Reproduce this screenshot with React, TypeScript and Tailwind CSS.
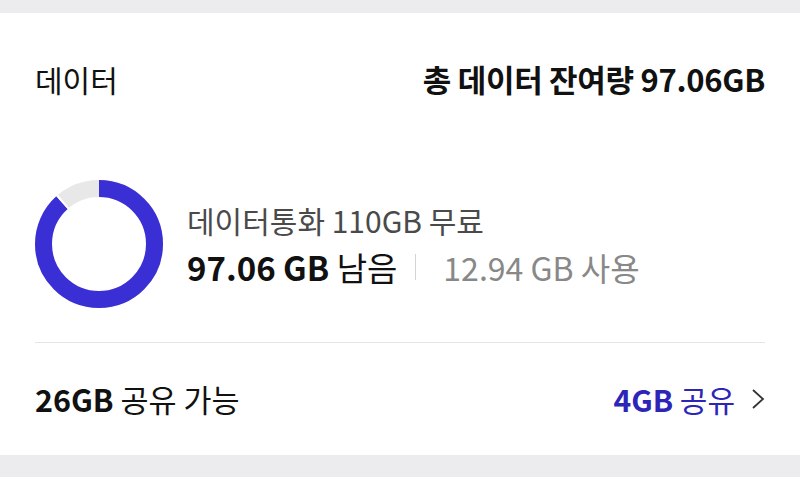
const font = { fontFamily: '"Noto Sans CJK KR", "Noto Sans", sans-serif' }

function Donut() {
    const r = 55.5
    const c = 2 * Math.PI * r
    const used = 12.94 / 110
    const blue = c * (1 - used)
    return (
        <svg width="128" height="128" viewBox="0 0 128 128" className="shrink-0">
            <g transform="rotate(-90 64 64)">
                <circle cx="64" cy="64" r={r} fill="none" stroke="#e8e8e8" strokeWidth="17" />
                <circle
                    cx="64"
                    cy="64"
                    r={r}
                    fill="none"
                    stroke="#3a2fd5"
                    strokeWidth="17"
                    strokeDasharray={`${blue} ${c}`}
                />
                <circle
                    cx="64"
                    cy="64"
                    r={r}
                    fill="none"
                    stroke="#ffffff"
                    strokeWidth="17"
                    strokeDasharray={`2 ${c}`}
                    strokeDashoffset={-blue}
                />
            </g>
        </svg>
    )
}

export default function App() {
    return (
        <div className="w-[800px] h-[477px] bg-[#ececee] overflow-hidden" style={font}>
            <div className="mt-[13px] h-[442px] bg-white px-[35px] flex flex-col">
                {/* header */}
                <div className="h-[132px] flex items-center justify-between">
                    <span className="text-[30px] text-[#111] leading-[36px]">데이터</span>
                    <span className="text-[31px] font-bold text-[#111] leading-[36px] tracking-[-0.3px]">
                        총 데이터 잔여량 97.06GB
                    </span>
                </div>

                {/* usage */}
                <div className="h-[197px] flex items-center gap-[24px] pt-[1px]">
                    <Donut />
                    <div className="flex flex-col gap-[9px]">
                        <span className="text-[30px] text-[#4a4a4a] leading-[36px]">데이터통화 110GB 무료</span>
                        <div className="flex items-center h-[40px]">
                            <span className="text-[33px] text-[#111] leading-[40px]">
                                <span className="font-bold">97.06 GB</span> 남음
                            </span>
                            <span className="ml-[18px] mr-[27px] w-px h-[26px] bg-[#d4d4d4]" />
                            <span className="text-[32px] text-[#888] leading-[40px]">12.94 GB 사용</span>
                        </div>
                    </div>
                </div>

                <div className="h-px bg-[#e6e6e6]" />

                {/* share */}
                <div className="flex-1 flex items-center justify-between">
                    <span className="text-[30.5px] text-[#111] leading-[36px]">
                        <span className="font-bold">26GB</span> 공유 가능
                    </span>
                    <div className="flex items-center gap-[16px]">
                        <span className="text-[30px] text-[#2d25b8] leading-[36px]">
                            <span className="font-bold">4GB</span> 공유
                        </span>
                        <svg width="14" height="22" viewBox="0 0 14 22">
                            <polyline points="2,2 12,11 2,20" fill="none" stroke="#333" strokeWidth="1.8" />
                        </svg>
                    </div>
                </div>
            </div>
        </div>
    )
}
